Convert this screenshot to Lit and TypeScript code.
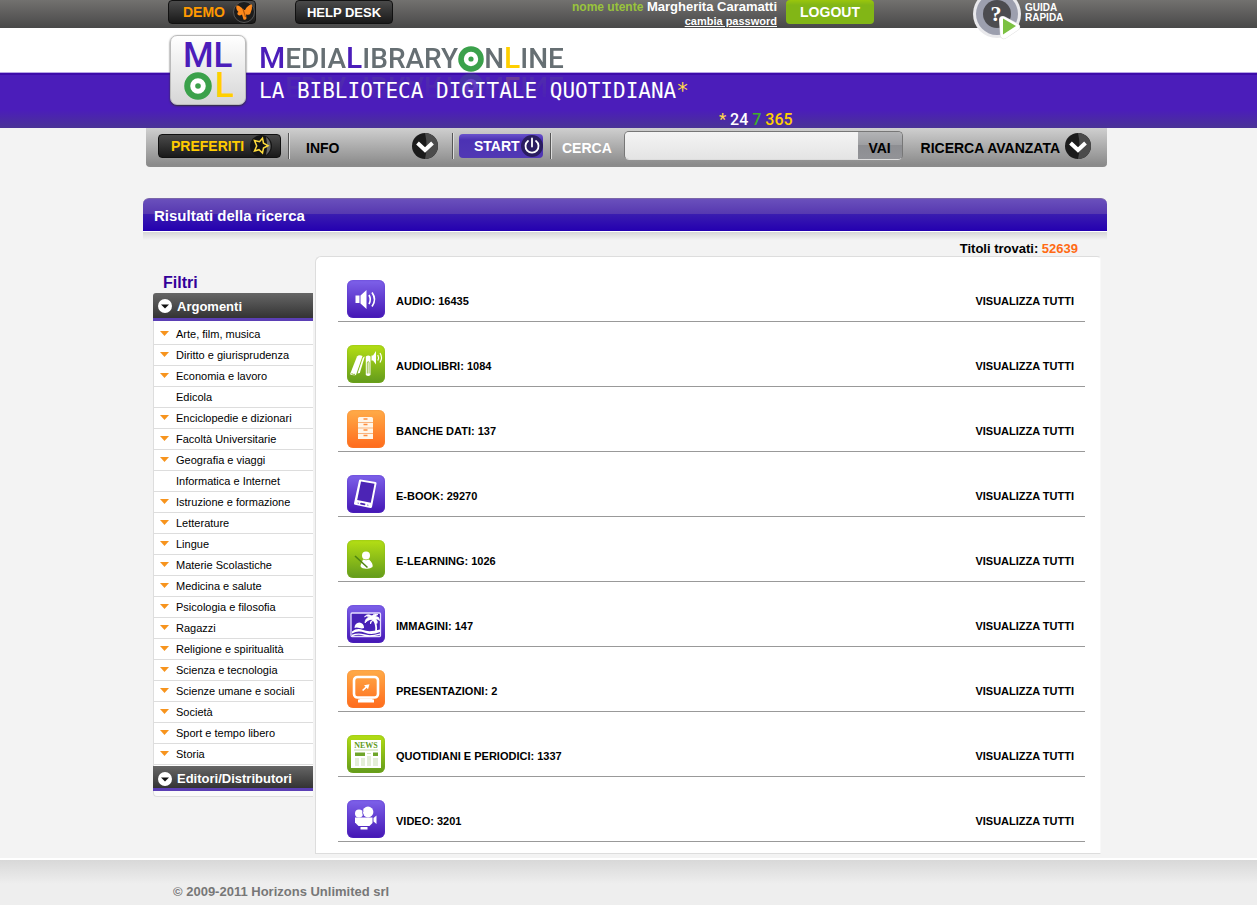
import { LitElement, html, css, svg, nothing } from "lit";
import { customElement, property } from "lit/decorators.js";

interface Topic {
  name: string;
  leaf?: boolean;
}

interface Media {
  icon: string;
  tone: "violet" | "green" | "orange";
  name: string;
  count: number;
}

const topics: Topic[] = [
  { name: "Arte, film, musica" },
  { name: "Diritto e giurisprudenza" },
  { name: "Economia e lavoro" },
  { name: "Edicola", leaf: true },
  { name: "Enciclopedie e dizionari" },
  { name: "Facoltà Universitarie" },
  { name: "Geografia e viaggi" },
  { name: "Informatica e Internet", leaf: true },
  { name: "Istruzione e formazione" },
  { name: "Letterature" },
  { name: "Lingue" },
  { name: "Materie Scolastiche" },
  { name: "Medicina e salute" },
  { name: "Psicologia e filosofia" },
  { name: "Ragazzi" },
  { name: "Religione e spiritualità" },
  { name: "Scienza e tecnologia" },
  { name: "Scienze umane e sociali" },
  { name: "Società" },
  { name: "Sport e tempo libero" },
  { name: "Storia" },
];

const media: Media[] = [
  { icon: "audio", tone: "violet", name: "AUDIO", count: 16435 },
  { icon: "audiobook", tone: "green", name: "AUDIOLIBRI", count: 1084 },
  { icon: "database", tone: "orange", name: "BANCHE DATI", count: 137 },
  { icon: "ebook", tone: "violet", name: "E-BOOK", count: 29270 },
  { icon: "learning", tone: "green", name: "E-LEARNING", count: 1026 },
  { icon: "image", tone: "violet", name: "IMMAGINI", count: 147 },
  { icon: "slides", tone: "orange", name: "PRESENTAZIONI", count: 2 },
  { icon: "news", tone: "green", name: "QUOTIDIANI E PERIODICI", count: 1337 },
  { icon: "video", tone: "violet", name: "VIDEO", count: 3201 },
];

const glyphs: Record<string, unknown> = {
  audio: svg`
    <path d="M8.500 15.500h4v7.500h-4z M13.500 15.500L19.500 10v19L13.500 23.500z" fill="#fff"/>
    <path d="M22 15q2.500 4.500 0 9M25 12.500q5 7 0 14" fill="none" stroke="#fff" stroke-width="1.700"/>`,
  audiobook: svg`
    <path d="M10 11.500q2-2 5.500-.5L9 30q-3 1-6-.8z" fill="#fff"/>
    <path d="M4.500 28.600q2 1.200 3.600.7" fill="none" stroke="#86b81c"/>
    <path d="M15.800 13q.8-1.500 2-1.500L12.800 28l-2.300.5z" fill="#fff"/>
    <path d="M18.800 11.500q2.500-1.800 4.700 0V30q-2.300 1.800-4.700 0z" fill="#fff"/>
    <path d="M20.300 28.500V18q0-1.500.9-1.500t.9 1.500v10.500" fill="none" stroke="#86b81c" stroke-width=".8"/>
    <path d="M24.500 10.500h1.500L29 6v13.500L26 15.500h-1.500z" fill="#fff"/>
    <path d="M30.800 10q1.500 2.500 0 5.500M33 8q3 4.500 0 9.500" fill="none" stroke="#fff" stroke-width="1.200"/>`,
  database: svg`
    <path d="M11 8.500q0-1.500 1.500-1.500h12q1.500 0 1.500 1.500V29H11z" fill="#fff5e8"/>
    <path d="M11 12.500h15M11 18h15M11 23.500h15" stroke="#f9b37c"/>
    <path d="M16.500 9h4M16.500 14.500h4M16.500 20h4M16.500 25.500h4" stroke="#ff8d3a" stroke-width="1.400"/>`,
  ebook: svg`
    <path d="M13.500 4.500L28.500 7q1.200.3 1 1.500L25 32q-.4 1.300-1.700 1L8 29.800q-1.300-.4-1-1.600L12 5.500q.3-1.200 1.500-1z" fill="#fff"/>
    <path d="M14 6.500l13.500 2.300-3.700 19L10.200 25z" fill="#4c24b5"/>
    <path d="M14 28.600l3.500.8" stroke="#4c24b5" stroke-width="1.800" stroke-linecap="round"/>
    <path d="M10.500 28l1.500.3M20 30l1.500.3" stroke="#8b74dc"/>`,
  learning: svg`
    <circle cx="19" cy="15.500" r="4" fill="#fff"/>
    <path d="M16 19.500q3 1.500 6 0 4.500 4 3.500 7.500-3 2.500-8 1.500-4-.5-4-3z" fill="#fff"/>
    <path d="M8 16l12.500 11.500" stroke="#4e8411" stroke-width="1.600"/>`,
  image: svg`
    <rect x="4" y="8" width="29.500" height="23.500" rx="1" fill="#4822b7" stroke="#e6e0ff" stroke-width="1.300"/>
    <path d="M7.500 23a4.800 5.500 0 0 1 9.600 0q-2 .8-4.800 0t-4.800 0z" fill="#fff"/>
    <path d="M5 26.500q5-4 11-1.500T33 24.500v2.500q-8 3.500-15 .8T5 28.500z" fill="#fff"/>
    <path d="M5 30.500q6-2.500 12-.5t16-.8" fill="none" stroke="#fff" stroke-width="1.400"/>
    <path d="M29 26q1-6-2.500-11.500" fill="none" stroke="#fff" stroke-width="1.800"/>
    <path d="M26.500 15Q22 13 18 18q0-5 5-6-4-2-5.500 0Q20 8 25 11q2-3 6-1.500-2 .5-2.500 2 4 0 4 4-2-2-4-1.500 2.500 2 1.500 4.500-3-1-3.500-3.500-2.500 1-3 4-1.500-2.500 3-4z" fill="#fff" stroke="#fff" stroke-width=".8"/>`,
  slides: svg`
    <rect x="7" y="7" width="24" height="20.500" rx="3.500" fill="none" stroke="#fff" stroke-width="2.600"/>
    <path d="M12.500 28.500h13v1h1.500v3h-16v-3h1.500z" fill="#fff"/>
    <path d="M15 20l3.500-3.200-1.500-1.500 5.500-1-1.500 5-1.300-1.500L16.200 21z" fill="#fff"/>`,
  news: svg`
    <rect x="4" y="5" width="30" height="28" fill="#fff"/>
    <text x="19" y="13" text-anchor="middle" font-family="Liberation Serif, serif" font-size="8" font-weight="700" fill="#5f9a1b">NEWS</text>
    <path d="M7 15h24" stroke="#b9d48f" stroke-width=".8"/>
    <path d="M8 17.500h10v3.500H8zM26 17.500h5v3.500h-5z" fill="#6fa62a"/>
    <path d="M20 18.500h4" stroke="#cfe0b8"/>
    <path d="M8 23h4v8H8zM14 23h4v8h-4zM20 21h4v10h-4zM26 23h5v8h-5z" fill="#e4eed8"/>`,
  video: svg`
    <circle cx="12" cy="13.500" r="4" fill="#fff"/>
    <circle cx="21" cy="12" r="5.400" fill="#fff"/>
    <path d="M16.200 10.500q-1.500 2 .3 5" fill="none" stroke="#6a4ed4" stroke-width=".9"/>
    <path d="M8 17.500h17.500V23l-3 3h-11L8 22.500z" fill="#fff"/>
    <path d="M26.500 18l3-2.500v8.500l-3-2.500z" fill="#fff"/>
    <path d="M13.500 27h7v2.400h-7z" fill="#fff"/>`,
};

const ring = html`<svg class="ring" viewBox="0 0 26 26" aria-hidden="true">
  <circle cx="13" cy="13" r="10" fill="#fff" stroke="#3ba14b" stroke-width="5.600" />
  <circle cx="13" cy="13" r="2.600" fill="#3ba14b" />
</svg>`;

const chevron = html`<svg width="26" height="26" viewBox="0 0 26 26" aria-hidden="true">
  <circle cx="13" cy="13" r="13" fill="#1b1b1b" />
  <path d="M13 0a13 13 0 0 1 0 26q3-13 0-26z" fill="#4b4b4b" />
  <path d="M5.500 10l7.500 7 7.500-7" fill="none" stroke="#fff" stroke-width="4" />
</svg>`;

@customElement("media-icon")
export class MediaIcon extends LitElement {
  @property() name = "";
  @property() tone = "violet";

  static styles = css`
    :host {
      display: block;
      flex: none;
    }
    .tile {
      width: 38px;
      height: 38px;
      border-radius: 6px;
      overflow: hidden;
    }
    .tile svg {
      display: block;
    }
    .violet {
      background: linear-gradient(#7e62ea, #4416b4);
      box-shadow: inset 0 0 2px #5a35c8;
    }
    .green {
      background: linear-gradient(#b5df14, #629a1c);
      box-shadow: inset 0 0 2px #7fae1c;
    }
    .orange {
      background: linear-gradient(#ffac48, #ff6a1c);
      box-shadow: inset 0 0 2px #f08a3a;
    }
  `;

  render() {
    return html`<div class="tile ${this.tone}">
      <svg width="38" height="38" viewBox="0 0 38 38" aria-hidden="true">${glyphs[this.name]}</svg>
    </div>`;
  }
}

@customElement("site-header")
export class SiteHeader extends LitElement {
  static styles = css`
    :host {
      display: block;
    }
    .wrap {
      box-sizing: border-box;
      width: 100%;
      max-width: 971px;
      margin: 0 auto;
    }
    button {
      font-family: inherit;
      font-weight: 700;
      border: 0;
      padding: 0;
      cursor: pointer;
    }
    svg {
      display: block;
      flex: none;
    }
    .top {
      height: 28px;
      background: linear-gradient(#72716f, #484848);
    }
    .top .wrap {
      display: flex;
      align-items: flex-start;
      padding-left: 25px;
    }
    .dark {
      display: flex;
      align-items: center;
      justify-content: center;
      height: 24px;
      box-sizing: border-box;
      border: 1px solid #111;
      border-radius: 4px;
      background: linear-gradient(#4a4a4a, #191919);
      color: #fff;
      font-size: 13px;
    }
    .demo {
      width: 88px;
      margin-right: 39px;
      justify-content: space-between;
      padding-left: 14px;
      color: #ff9900;
      font-size: 14px;
    }
    .help {
      width: 98px;
    }
    .user {
      flex: 1;
      text-align: right;
      color: #fff;
      font-size: 13px;
      font-weight: 700;
      line-height: 14px;
    }
    .user .tag {
      color: #99c33c;
      font-size: 12px;
    }
    .user a {
      display: block;
      color: #fff;
      font-size: 11px;
    }
    .logout {
      width: 88px;
      height: 24px;
      margin: 0 99px 0 9px;
      border-radius: 4px;
      background: linear-gradient(#9ac60c, #82b616 5px, #82b616);
      color: #fff;
      font-size: 14px;
    }
    .guide {
      display: flex;
      width: 141px;
      gap: 2px;
      color: #fff;
      text-decoration: none;
      font-size: 10px;
      font-weight: 700;
      line-height: 10px;
    }
    .guide svg {
      position: relative;
      z-index: 1;
    }
    .guide span {
      padding-top: 3px;
    }
    .band {
      height: 100px;
      background: linear-gradient(
        #fff 44px,
        #b7a6e4 44px,
        #b7a6e4 45px,
        #3d0caa 45px,
        #3d0caa 47px,
        #4b1dba 47px,
        #4b1dba 82px,
        #4a3396
      );
    }
    .band .wrap {
      display: flex;
      gap: 13px;
      padding-left: 27px;
      font-family: Roboto, sans-serif;
    }
    .badge {
      box-sizing: border-box;
      width: 76px;
      height: 70px;
      margin-top: 7px;
      padding: 5px 12px;
      border: 1px solid #bbb;
      border-radius: 7px;
      background: linear-gradient(#fff, #d6d6d6);
      box-shadow: 0 1px 2px #333;
      color: #4b1dba;
      font-size: 35px;
      font-weight: 500;
      line-height: 30px;
    }
    .badge span {
      display: flex;
      align-items: center;
    }
    .badge .ring {
      width: 28px;
      height: 28px;
      margin: 0 3px 0 1px;
    }
    .yellow {
      color: #ffcf00;
    }
    .brand {
      padding-top: 12px;
    }
    .word {
      display: flex;
      align-items: baseline;
      margin: 0;
      color: #666f73;
      font-size: 28px;
      font-weight: 500;
      line-height: 36px;
      -webkit-box-reflect: below -9px linear-gradient(transparent, rgba(0, 0, 0, 0.25));
    }
    .word b {
      color: #4b1dba;
      font-size: 30px;
      font-weight: 500;
    }
    .word b.yellow {
      color: #ffcf00;
    }
    .word .ring {
      align-self: center;
      width: 26px;
      height: 26px;
    }
    .tagline {
      position: relative;
      margin: 0;
      color: #fff;
      font-family: "DejaVu Sans Mono", monospace;
      font-size: 21px;
      line-height: 28px;
      white-space: nowrap;
    }
    .tagline i,
    .always i {
      color: #ffd84a;
      font-style: normal;
    }
    .always {
      margin: 0;
      padding-left: 460px;
      color: #fff;
      font-size: 16px;
      font-weight: 500;
      line-height: 30px;
    }
    .seven {
      color: #3fae2a;
    }
  `;

  render() {
    return html`
      <div class="top">
        <div class="wrap">
          <button class="dark demo">
            DEMO
            <svg width="22" height="22" viewBox="0 0 22 22" aria-hidden="true">
              <circle cx="11" cy="11" r="10.500" fill="#1c1c1c" stroke="#555" />
              <path d="M10.500 9Q7 4 3.500 4.500q-1 3.500 2 6.500-2 .5-.5 3 2 1 4-.5l1.500 5q2 .8 3-1l-.5-4q4.500 1 4.500-1.500 2-4.500 1.500-8.500-4 0-7 5.500z" fill="#ff8a1c" />
              <path d="M10 8l2.500 8" stroke="#b4560a" stroke-width="1.200" />
            </svg>
          </button>
          <button class="dark help">HELP DESK</button>
          <div class="user">
            <span class="tag">nome utente</span> Margherita Caramatti
            <a href="#password">cambia password</a>
          </div>
          <button class="logout">LOGOUT</button>
          <a class="guide" href="#guida">
            <svg width="50" height="40" viewBox="0 0 50 40" aria-hidden="true">
              <circle cx="24" cy="14" r="24" fill="#e9e9ec" />
              <circle cx="24" cy="14" r="21" fill="#9c9fae" />
              <circle cx="24" cy="14" r="14" fill="#4c4c50" />
              <text x="23" y="21" text-anchor="middle" font-family="Liberation Serif, serif" font-size="22" font-weight="700" fill="#fff">?</text>
              <path d="M30 20l13 7-12 8z" fill="#fff" stroke="#ddd" stroke-width="8" stroke-linejoin="round" />
              <path d="M30 20l13 7-12 8z" fill="#fff" stroke="#fff" stroke-width="7" stroke-linejoin="round" />
              <path d="M30 18.500l13 7.500-13 8.500z" fill="#7cc142" />
            </svg>
            <span>GUIDA<br />RAPIDA</span>
          </a>
        </div>
      </div>
      <div class="band">
        <div class="wrap">
          <div class="badge"><span>ML</span><span>${ring}<span class="yellow">L</span></span></div>
          <div class="brand">
            <h1 class="word"><b>M</b>EDIA<b>L</b>IBRARY${ring}N<b class="yellow">L</b>INE</h1>
            <p class="tagline">LA BIBLIOTECA DIGITALE QUOTIDIANA<i>*</i></p>
            <p class="always"><i>*</i> 24 <span class="seven">7</span> <span class="yellow">365</span></p>
          </div>
        </div>
      </div>
    `;
  }
}

@customElement("tool-bar")
export class ToolBar extends LitElement {
  static styles = css`
    :host {
      display: block;
    }
    .bar {
      display: flex;
      align-items: center;
      box-sizing: border-box;
      height: 39px;
      margin: 0 7px 0 3px;
      padding: 0 16px 2px 12px;
      border-radius: 0 0 4px 4px;
      border-bottom: 2px solid #8b8b8b;
      background: linear-gradient(#cfcfcf, #8a8a8a);
    }
    button {
      display: flex;
      align-items: center;
      border: 0;
      padding: 0;
      background: none;
      color: #000;
      font-family: inherit;
      font-size: 14px;
      font-weight: 700;
      cursor: pointer;
    }
    svg {
      display: block;
      flex: none;
    }
    .fav,
    .start {
      box-sizing: border-box;
      height: 24px;
      border-radius: 4px;
      justify-content: space-between;
    }
    .fav {
      width: 123px;
      padding: 0 8px 0 12px;
      border: 1px solid #111;
      background: linear-gradient(#4a4a4a, #191919);
      color: #ffcc00;
    }
    .start {
      width: 84px;
      padding-left: 15px;
      background: linear-gradient(#6a54cc, #4c32b4 6px, #5138b4);
      color: #fff;
    }
    .sep {
      width: 1px;
      height: 26px;
      margin: 0 5px 0 7px;
      border-right: 1px solid #ddd;
      background: #555;
    }
    .low {
      padding-top: 4px;
    }
    .info {
      width: 132px;
      margin: 0 7px 0 11px;
      justify-content: space-between;
    }
    form {
      display: flex;
      flex: 1;
      align-items: center;
      margin-left: 5px;
    }
    label {
      margin-right: 12px;
      color: #fff;
      font-size: 14px;
      font-weight: 700;
    }
    .field {
      display: flex;
      flex: 1;
      box-sizing: border-box;
      height: 29px;
      margin-right: 18px;
      overflow: hidden;
      border: 1px solid #777;
      border-bottom-color: #ddd;
      border-radius: 5px;
    }
    input {
      flex: 1;
      min-width: 0;
      border: 0;
      padding: 0 8px;
      outline: 0;
      background: linear-gradient(#f4f4f4, #e4e4e4);
      font: inherit;
    }
    .go {
      width: 44px;
      justify-content: center;
      background: linear-gradient(#b3b4b6, #9d9ea1 50%, #8d8e92 50%, #929397);
    }
    .advanced {
      gap: 5px;
    }
  `;

  render() {
    return html`<nav class="bar">
      <button class="fav">
        PREFERITI
        <svg width="22" height="22" viewBox="0 0 22 22" aria-hidden="true">
          <circle cx="11" cy="11" r="11" fill="#151515" />
          <path d="M16 2a11 11 0 0 1 0 18q2-9 0-18z" fill="#666" />
          <path d="M4.500 5.500l5 1.200 3-3.500 1 5 4.500 2.500-4.500 2.300-1 5-3.500-3.300-4.500 1.300 2.200-5z" fill="none" stroke="#ffdc3c" stroke-width="1.500" />
        </svg>
      </button>
      <span class="sep"></span>
      <button class="info"><span class="low">INFO</span> ${chevron}</button>
      <span class="sep"></span>
      <button class="start">
        START
        <svg width="22" height="22" viewBox="0 0 22 22" aria-hidden="true">
          <circle cx="11" cy="11" r="11" fill="#2a1d60" />
          <path d="M7 6a6.500 6.500 0 1 0 8 0M11 3.500v8" fill="none" stroke="#fff" stroke-width="1.800" stroke-linecap="round" />
        </svg>
      </button>
      <span class="sep"></span>
      <form>
        <label class="low" for="query">CERCA</label>
        <div class="field">
          <input id="query" type="text" />
          <button class="go" type="button"><span class="low">VAI</span></button>
        </div>
      </form>
      <button class="advanced"><span class="low">RICERCA AVANZATA</span> ${chevron}</button>
    </nav>`;
  }
}

@customElement("filter-panel")
export class FilterPanel extends LitElement {
  static styles = css`
    :host {
      display: block;
      width: 160px;
      flex: none;
    }
    h2 {
      margin: 0;
      padding: 18px 0 1px 10px;
      color: #330099;
      font-size: 16px;
      line-height: 18px;
    }
    .head {
      display: flex;
      align-items: center;
      gap: 5px;
      box-sizing: border-box;
      width: 100%;
      height: 28px;
      padding: 1px 5px 0;
      border: 0;
      border-bottom: 3px solid #5b3fb5;
      border-radius: 3px 0 0 0;
      background: linear-gradient(#666, #333);
      color: #fff;
      font-family: inherit;
      font-size: 13px;
      font-weight: 700;
      cursor: pointer;
    }
    .second {
      height: 25px;
      padding-top: 3px;
      border-radius: 0;
    }
    ul {
      margin: 0;
      padding: 3px 0 1px;
      border-left: 1px solid #ddd;
      background: #fff;
      list-style: none;
    }
    li {
      display: flex;
      align-items: center;
      box-sizing: border-box;
      height: 21px;
      border-bottom: 1px solid #ddd;
      padding-left: 6px;
    }
    li svg {
      width: 9px;
      margin-right: 7px;
    }
    a {
      color: #000;
      font-size: 11px;
      text-decoration: none;
    }
    .tail {
      height: 5px;
      border: 1px solid #ddd;
      border-width: 0 0 1px 1px;
      border-radius: 0 0 0 4px;
      background: #fafafa;
    }
  `;

  private heading(label: string, extra = "") {
    return html`<button class="head ${extra}">
      <svg width="14" height="14" viewBox="0 0 14 14" aria-hidden="true">
        <circle cx="7" cy="7" r="7" fill="#fff" />
        <path d="M3 5.500h8L7 9.500z" fill="#111" />
      </svg>
      ${label}
    </button>`;
  }

  render() {
    return html`
      <h2>Filtri</h2>
      ${this.heading("Argomenti")}
      <ul>
        ${topics.map(
          (t) => html`<li>
            <svg height="6" viewBox="0 0 9 6" aria-hidden="true">
              ${t.leaf ? nothing : svg`<path d="M0 0h9L4.500 5z" fill="#f7941d"/>`}
            </svg>
            <a href="#argomento">${t.name}</a>
          </li>`,
        )}
      </ul>
      ${this.heading("Editori/Distributori", "second")}
      <div class="tail"></div>
    `;
  }
}

@customElement("app-root")
export class AppRoot extends LitElement {
  static styles = css`
    :host {
      display: flex;
      flex-direction: column;
      min-height: 100vh;
      background: #f3f3f3;
      color: #000;
      font-family: "Liberation Sans", Arial, sans-serif;
    }
    .wrap {
      box-sizing: border-box;
      width: 100%;
      max-width: 971px;
      margin: 0 auto;
    }
    main {
      padding-right: 7px;
    }
    .title {
      margin: 31px 0 0;
      padding: 2px 0 0 11px;
      border-radius: 6px 6px 0 0;
      border-top: 1px solid #7a66a8;
      background: linear-gradient(#6a50bc, #5638b0 15px, #3a1cb0 15px, #2400b0);
      color: #fff;
      font-size: 15px;
      line-height: 30px;
    }
    .shade {
      height: 8px;
      border-top: 1px solid #fff;
      background: linear-gradient(#d6d6d6, #f3f3f3);
    }
    .found {
      margin: 0;
      padding: 2px 29px 0 0;
      text-align: right;
      font-size: 13px;
      font-weight: 700;
      line-height: 14px;
    }
    .found span {
      color: #ff6a13;
    }
    .columns {
      display: flex;
      align-items: flex-start;
      gap: 2px;
      padding: 0 6px 0 10px;
    }
    .results {
      flex: 1;
      margin: 0;
      padding: 0 15px 11px 22px;
      border: 1px solid #ddd;
      border-right-color: #f8f8f8;
      border-radius: 6px 4px 0 0;
      background: #fff;
      list-style: none;
    }
    .row {
      display: flex;
      align-items: flex-end;
      gap: 11px;
      box-sizing: border-box;
      height: 65px;
      padding: 0 11px 3px 9px;
      border-bottom: 1px solid #999;
      font-size: 11px;
      font-weight: 700;
      line-height: 34px;
    }
    .name {
      flex: 1;
    }
    .row a {
      color: #000;
      text-decoration: none;
    }
    footer {
      flex: 1;
      margin-top: 4px;
      border-top: 2px solid #fff;
      background: linear-gradient(#d8d8d8, #eee 24px);
      color: #777;
      font-size: 13px;
      font-weight: 700;
      line-height: 16px;
    }
    footer .wrap {
      padding: 24px 0 5px 30px;
    }
  `;

  render() {
    return html`
      <site-header></site-header>
      <div class="wrap"><tool-bar></tool-bar></div>
      <main class="wrap">
        <h1 class="title">Risultati della ricerca</h1>
        <div class="shade"></div>
        <p class="found">Titoli trovati: <span>52639</span></p>
        <div class="columns">
          <filter-panel></filter-panel>
          <ul class="results">
            ${media.map(
              (m) => html`<li class="row">
                <media-icon name=${m.icon} tone=${m.tone}></media-icon>
                <span class="name">${m.name}: ${m.count}</span>
                <a href="#tutti">VISUALIZZA TUTTI</a>
              </li>`,
            )}
          </ul>
        </div>
      </main>
      <footer><div class="wrap">© 2009-2011 Horizons Unlimited srl</div></footer>
    `;
  }
}
